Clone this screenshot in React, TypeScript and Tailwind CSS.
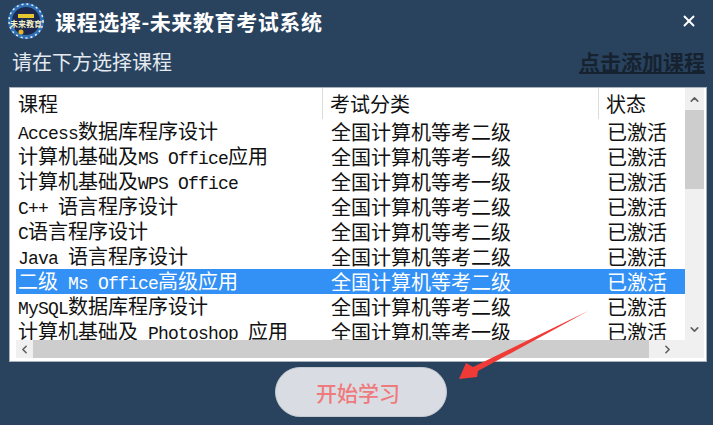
import { ChevronDown, ChevronLeft, ChevronRight, ChevronUp, X } from 'lucide-react';

const COURSES = [
  ['Access数据库程序设计', '全国计算机等考二级'],
  ['计算机基础及MS Office应用', '全国计算机等考一级'],
  ['计算机基础及WPS Office', '全国计算机等考一级'],
  ['C++ 语言程序设计', '全国计算机等考二级'],
  ['C语言程序设计', '全国计算机等考二级'],
  ['Java 语言程序设计', '全国计算机等考二级'],
  ['二级 Ms Office高级应用', '全国计算机等考二级'],
  ['MySQL数据库程序设计', '全国计算机等考二级'],
  ['计算机基础及 Photoshop 应用', '全国计算机等考一级'],
];

// latin runs are half the width of the CJK glyphs, like SimSun
function Mixed({ text }: Readonly<{ text: string }>) {
  return (
    <>
      {text.split(/([\x00-\x7f]+)/).map((part, i) =>
        /^[\x00-\x7f]/.test(part) ? (
          <span key={i} className="font-['Liberation_Mono',monospace] text-[18px] tracking-[-0.8px]">
            {part}
          </span>
        ) : (
          <span key={i}>{part}</span>
        )
      )}
    </>
  );
}

function Logo() {
  return (
    <svg width="38" height="38" viewBox="0 0 38 38" className="shrink-0">
      <circle cx="19" cy="19" r="18" fill="#2f6fb5" />
      <circle cx="19" cy="19" r="17" fill="none" stroke="#e8eef5" strokeWidth="1.5" strokeDasharray="2 3" />
      <circle cx="19" cy="19" r="14" fill="#1d2a4d" />
      <rect x="11" y="12" width="16" height="4" fill="#e6c62e" />
      <text x="19" y="25" textAnchor="middle" fontSize="8" fontWeight="700" fill="#f4f0c8" fontFamily="'Noto Sans CJK SC', sans-serif">
        未来教育
      </text>
      <circle cx="14" cy="30" r="2.5" fill="#e0b92a" />
    </svg>
  );
}

export default function App() {
  return (
    <div className="relative w-[713px] h-[425px] overflow-hidden bg-[#29435f] font-['Noto_Sans_CJK_SC',sans-serif] flex flex-col">
      {/* title bar */}
      <div className="h-[40px] pl-[7px] pr-[15px] pt-[2px] flex items-center text-white">
        <Logo />
        <div className="ml-[10px] text-[21px] tracking-[0.6px] font-bold leading-none">课程选择-未来教育考试系统</div>
        <X className="ml-auto" size={18} strokeWidth={2.5} />
      </div>

      <div className="h-[43px] pl-[12px] pr-[8px] flex items-center justify-between">
        <span className="text-[20px] leading-none text-[#e4eaf0]">请在下方选择课程</span>
        <span className="text-[21px] font-bold leading-none underline text-[#16222f]">点击添加课程</span>
      </div>

      {/* course list */}
      <div className="ml-[9px] mt-[4px] w-[698px] h-[275px] bg-white border border-[#a9b2bc] pl-[6px] pr-[2px] flex flex-col text-[20px] text-[#111]">
        <div className="flex h-[252px]">
          <div className="flex-1 overflow-hidden">
            <div className="flex h-[31px] items-center">
              <div className="w-[307px] pl-[2px] h-full flex items-center border-r border-[#dcdcdc]">课程</div>
              <div className="w-[276px] pl-[7px] h-full flex items-center border-r border-[#dcdcdc]">考试分类</div>
              <div className="pl-[7px]">状态</div>
            </div>
            {COURSES.map(([name, category], i) => (
              <div
                key={name}
                className={`flex h-[25px] items-center leading-none whitespace-nowrap ${i === 6 ? 'bg-[#3391f5] text-white' : ''}`}
              >
                <div className="w-[307px] pl-[2px]">
                  <Mixed text={name} />
                </div>
                <div className="w-[276px] pl-[8px]">{category}</div>
                <div className="pl-[8px]">已激活</div>
              </div>
            ))}
          </div>
          <div className="w-[19px] bg-[#f0f0f0] flex flex-col text-[#606060]">
            <div className="h-[22px] flex items-center justify-center">
              <ChevronUp size={13} strokeWidth={3} />
            </div>
            <div className="h-[79px] bg-[#cdcdcd]" />
            <div className="mt-auto h-[22px] flex items-center justify-center">
              <ChevronDown size={13} strokeWidth={3} />
            </div>
          </div>
        </div>
        <div className="h-[18px] flex bg-[#f0f0f0] text-[#606060]">
          <div className="w-[17px] flex items-center justify-center">
            <ChevronLeft size={13} strokeWidth={3} />
          </div>
          <div className="w-[616px] bg-[#cdcdcd]" />
          <div className="w-[36px] flex items-center justify-center">
            <ChevronRight size={13} strokeWidth={3} />
          </div>
        </div>
      </div>

      <div className="mt-[5px] ml-[275px] w-[172px] h-[50px] rounded-full bg-[#d9dde3] border border-[#c4c9d0] pr-[6px] flex items-center justify-center text-[21px] font-medium leading-none text-[#ef7a7c]">
        开始学习
      </div>

      {/* red arrow annotation */}
      <svg className="absolute left-0 top-0 pointer-events-none" width="713" height="425">
        <polygon points="459,379 466,363 473,367 588,311 478,371 477,377" fill="#f03a36" />
      </svg>
    </div>
  );
}
